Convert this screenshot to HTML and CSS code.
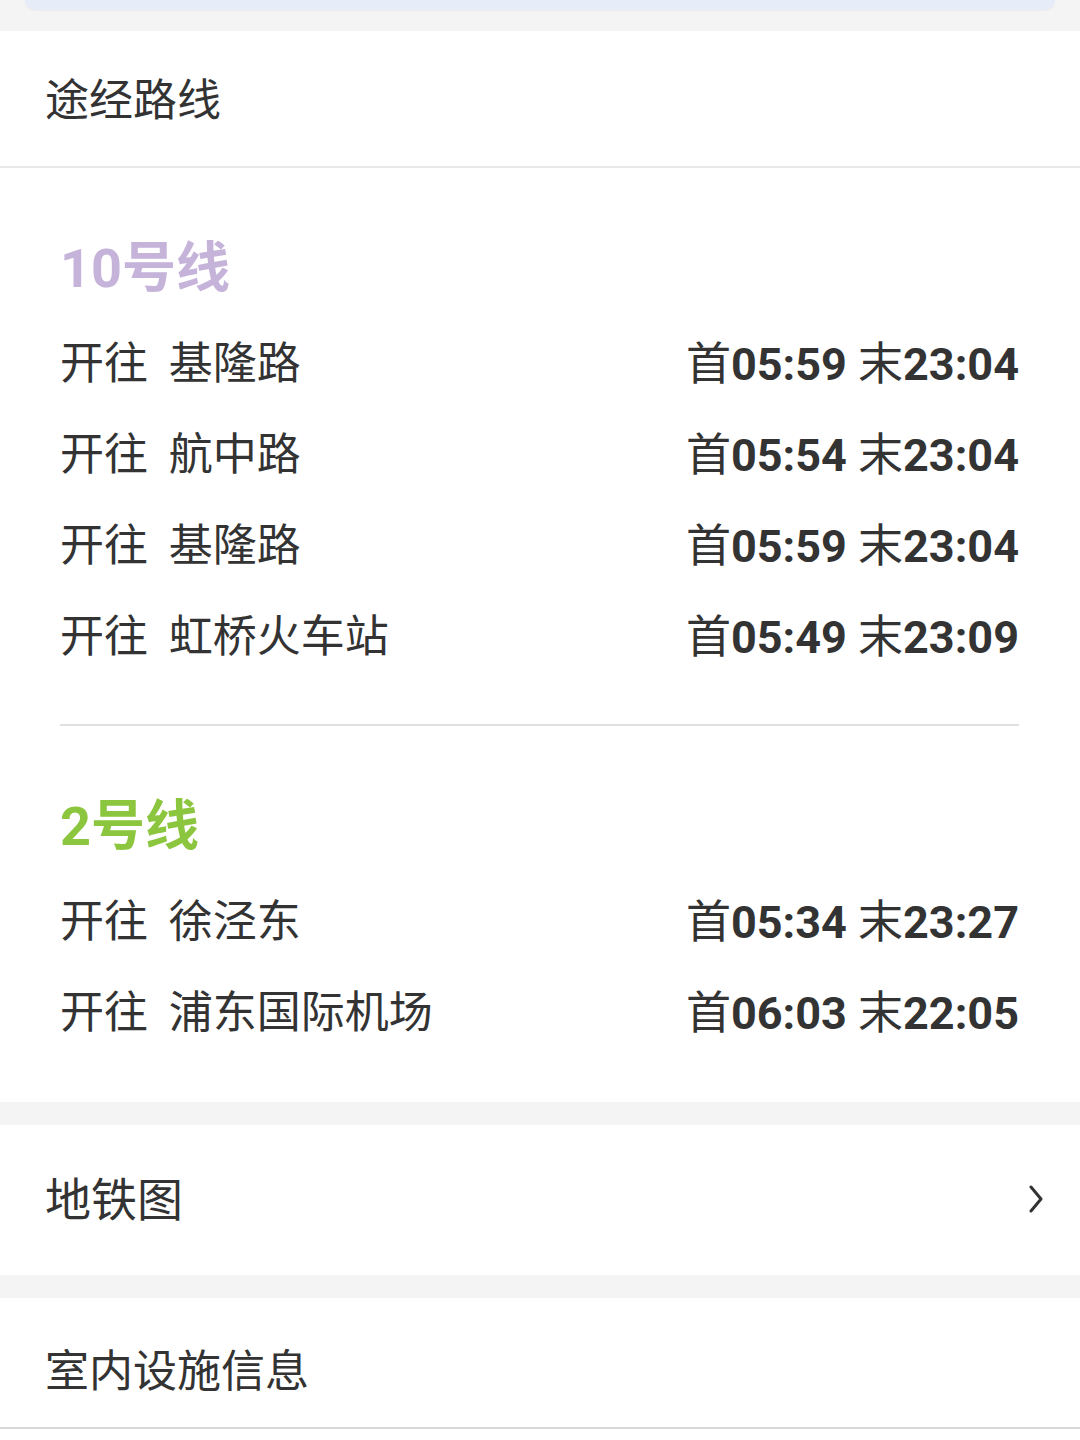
FILE: index.html
```html
<!DOCTYPE html>
<html lang="zh-CN">
<head>
<meta charset="utf-8">
<link rel="stylesheet" href="styles.css">
</head>
<body>
<div class="top-strip"><div class="top-card"></div></div>

<div class="section header-section">
  <div class="section-title">途经路线</div>
</div>

<div class="lines">
  <div class="line-group">
    <div class="line-name purple">10号线</div>
    <div class="row"><div class="dest"><span class="dir">开往</span> 基隆路</div><div class="time"><span class="k">首</span>05:59 <span class="k">末</span>23:04</div></div>
    <div class="row"><div class="dest"><span class="dir">开往</span> 航中路</div><div class="time"><span class="k">首</span>05:54 <span class="k">末</span>23:04</div></div>
    <div class="row"><div class="dest"><span class="dir">开往</span> 基隆路</div><div class="time"><span class="k">首</span>05:59 <span class="k">末</span>23:04</div></div>
    <div class="row"><div class="dest"><span class="dir">开往</span> 虹桥火车站</div><div class="time"><span class="k">首</span>05:49 <span class="k">末</span>23:09</div></div>
  </div>
  <div class="divider"></div>
  <div class="line-group last">
    <div class="line-name green">2号线</div>
    <div class="row"><div class="dest"><span class="dir">开往</span> 徐泾东</div><div class="time"><span class="k">首</span>05:34 <span class="k">末</span>23:27</div></div>
    <div class="row"><div class="dest"><span class="dir">开往</span> 浦东国际机场</div><div class="time"><span class="k">首</span>06:03 <span class="k">末</span>22:05</div></div>
  </div>
</div>

<div class="gap"></div>

<div class="section map-section">
  <div class="section-title big">地铁图</div>
  <svg class="chev" width="16" height="28" viewBox="0 0 16 28"><path d="M3 2 L13 14 L3 26" fill="none" stroke="#333" stroke-width="3" stroke-linecap="round" stroke-linejoin="round"/></svg>
</div>

<div class="gap"></div>

<div class="section facility-section">
  <div class="section-title">室内设施信息</div>
</div>
</body>
</html>
```

FILE: styles.css
```css
* { box-sizing: border-box; }
html, body { margin: 0; padding: 0; background: #ffffff; }
body {
  font-family: "Noto Sans CJK SC", "Noto Sans", sans-serif;
  color: #333333;
  width: 1080px;
}
.top-strip {
  height: 31px;
  background: #f4f4f4;
  padding: 0 25px;
}
.top-card {
  height: 10px;
  background: #e6edf8;
  border-radius: 0 0 12px 12px;
  box-shadow: 0 1px 2px rgba(0,0,0,0.04);
}
.section { background: #fff; }
.section-title {
  font-size: 44px;
  line-height: 60px;
  color: #333;
}
.header-section {
  padding: 36px 45px 39px;
  border-bottom: 2px solid #e8e8e8;
}
.lines {
  padding: 0 61px 0 60px;
}
.line-group { padding: 51px 0 41px; }
.line-group.last { padding-bottom: 43px; }
.line-name {
  height: 100px;
  line-height: 100px;
  font-size: 54px;
  font-weight: 700;
  font-family: Roboto, "Noto Sans CJK SC", sans-serif;
}
.purple { color: #c5b3d9; }
.green { color: #8cc63e; }
.row {
  height: 91px;
  padding-bottom: 9px;
  display: flex;
  align-items: center;
  justify-content: space-between;
  font-size: 44px;
}
.dest { color: #333; }
.dir { margin-right: 11px; }
.time {
  font-family: Roboto, "Noto Sans CJK SC", sans-serif;
  font-weight: 700;
  font-size: 45px;
  color: #333;
}
.time .k {
  font-family: "Noto Sans CJK SC", sans-serif;
  font-weight: 400;
}
.divider {
  height: 2px;
  background: #e0e0e0;
}
.gap {
  height: 23px;
  background: #f4f4f4;
}
.map-section {
  height: 150px;
  padding: 0 36px 0 45px;
  display: flex;
  align-items: center;
  justify-content: space-between;
}
.map-section .section-title { font-size: 46px; margin-top: -8px; }
.chev { margin-top: -2px; }
.facility-section {
  padding: 40px 45px 29px;
  border-bottom: 2px solid #d9d9d9;
}
```
